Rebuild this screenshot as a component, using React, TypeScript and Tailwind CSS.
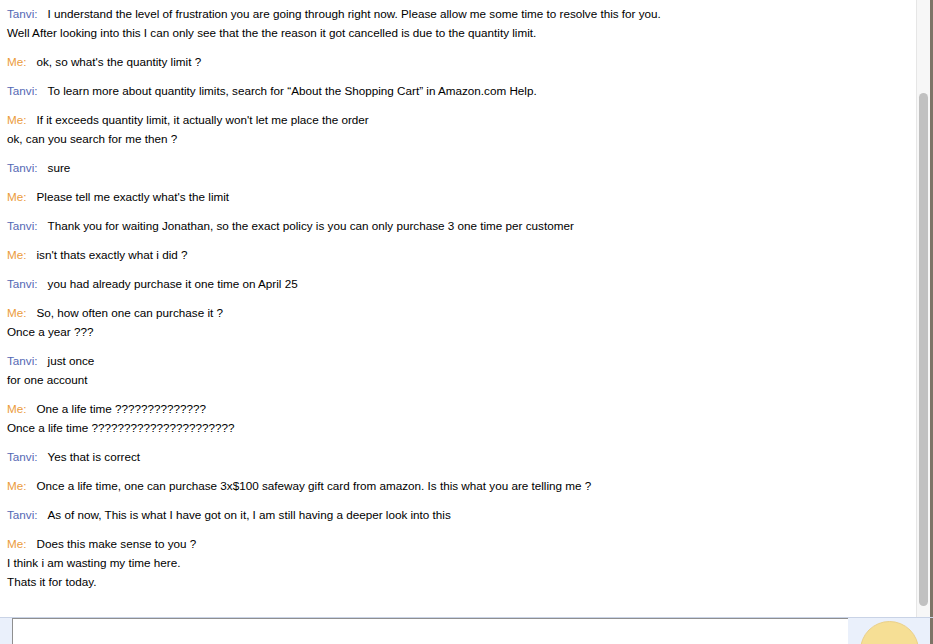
const MESSAGES: { who: 'Tanvi' | 'Me'; lines: string[] }[] = [
  { who: 'Tanvi', lines: ['I understand the level of frustration you are going through right now. Please allow me some time to resolve this for you.', 'Well After looking into this I can only see that the the reason it got cancelled is due to the quantity limit.'] },
  { who: 'Me', lines: ["ok, so what's the quantity limit ?"] },
  { who: 'Tanvi', lines: ['To learn more about quantity limits, search for \u201cAbout the Shopping Cart\u201d in Amazon.com Help.'] },
  { who: 'Me', lines: ["If it exceeds quantity limit, it actually won't let me place the order", 'ok, can you search for me then ?'] },
  { who: 'Tanvi', lines: ['sure'] },
  { who: 'Me', lines: ["Please tell me exactly what's the limit"] },
  { who: 'Tanvi', lines: ['Thank you for waiting Jonathan, so the exact policy is you can only purchase 3 one time per customer'] },
  { who: 'Me', lines: ["isn't thats exactly what i did ?"] },
  { who: 'Tanvi', lines: ['you had already purchase it one time on April 25'] },
  { who: 'Me', lines: ['So, how often one can purchase it ?', 'Once a year ???'] },
  { who: 'Tanvi', lines: ['just once', 'for one account'] },
  { who: 'Me', lines: ['One a life time ??????????????', 'Once a life time ??????????????????????'] },
  { who: 'Tanvi', lines: ['Yes that is correct'] },
  { who: 'Me', lines: ['Once a life time, one can purchase 3x$100 safeway gift card from amazon. Is this what you are telling me ?'] },
  { who: 'Tanvi', lines: ['As of now, This is what I have got on it, I am still having a deeper look into this'] },
  { who: 'Me', lines: ['Does this make sense to you ?', 'I think i am wasting my time here.', 'Thats it for today.'] },
]

export default function App() {
  return (
    <div className="w-[933px] h-[644px] flex flex-col bg-white overflow-hidden text-[11.7px] text-black" style={{ fontFamily: '"Liberation Sans", Arial, sans-serif' }}>
      <div className="flex flex-1 min-h-0">
        <div className="flex-1 pl-[7px] pt-[4px] leading-[19px]">
          {MESSAGES.map((m, i) => (
            <div key={i} className="mb-[10px]">
              {m.lines.map((l, j) => (
                <div key={j} className="whitespace-nowrap">
                  {j === 0 && (
                    <span className={`mr-[10px] ${m.who === 'Me' ? 'text-[#eb9c3c]' : 'text-[#5468b4]'}`}>{m.who}:</span>
                  )}
                  {l}
                </div>
              ))}
            </div>
          ))}
        </div>
        <div className="w-[14px] bg-[#f7f7f7] border-l border-[#e6e6e6] flex flex-col pt-[93px] pb-[11px] items-center">
          <div className="w-[9px] flex-1 rounded-full bg-[#c1c1c1]" />
        </div>
        <div className="w-[3px] bg-[#7d7466]" />
      </div>
      <div className="h-[27px] bg-[#eaf0fb] border-t border-[#c9d3e6] flex pl-[12px] relative">
        <div className="w-[836px] h-full bg-white border-l border-t border-[#8f8f8f]" />
        <div className="absolute left-[860px] top-[3px] w-[59px] h-[59px] rounded-full bg-[#f6df95] border border-[#ead08a]" />
        <div className="absolute right-0 top-0 w-[3px] h-full bg-[#7d7466]" />
      </div>
    </div>
  )
}
